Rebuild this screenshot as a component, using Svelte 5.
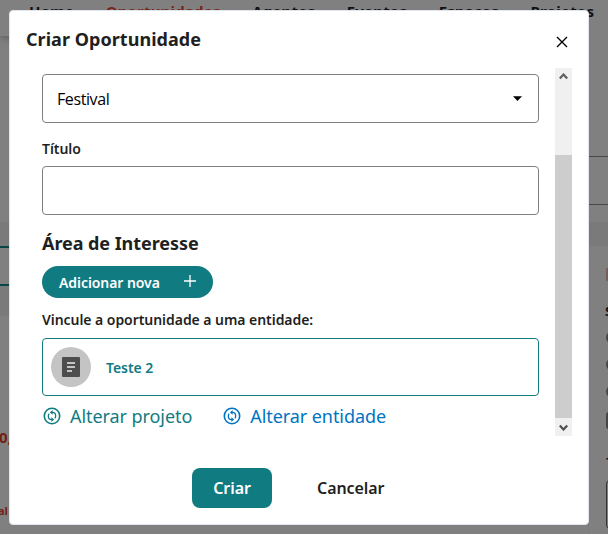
<script>
  const nav = ['Home', 'Oportunidades', 'Agentes', 'Eventos', 'Espaços', 'Projetos'];
  const links = [
    { label: 'Alterar projeto', tone: 'teal' },
    { label: 'Alterar entidade', tone: 'blue' }
  ];
</script>

<div class="screen">
  <div class="page">
    <header>
      {#each nav as item}
        <span class:active={item === 'Oportunidades'}>{item}</span>
      {/each}
    </header>
    <div class="columns">
      <div class="left">
        <div class="band"><div class="field"></div></div>
        <span class="count">0,</span>
        <span class="tag">al</span>
      </div>
      <div class="right">
        <div class="search"></div>
        <aside>
          <i class="bar"></i>
          <b>S</b>
          <i class="dot"></i><i class="dot"></i><i class="dot"></i><i class="box"></i>
          <b class="type">T</b>
          <i class="input"></i>
        </aside>
      </div>
    </div>
  </div>

  <div class="modal">
    <div class="head">
      <h1>Criar Oportunidade</h1>
      <svg class="close" width="12" height="12" viewBox="0 0 12 12"><path d="M1 1l10 10M11 1L1 11" stroke="#000" stroke-width="1.4" fill="none" /></svg>
    </div>

    <div class="body">
      <div class="form">
        <div class="input select">
          <span>Festival</span>
          <svg width="9" height="5" viewBox="0 0 9 5"><path d="M0 .3h9L4.5 5z" fill="#000" /></svg>
        </div>
        <div class="label title">Título</div>
        <div class="input"></div>
        <h2>Área de Interesse</h2>
        <div class="add">
          <span>Adicionar nova</span>
          <svg width="12" height="12" viewBox="0 0 12 12"><path d="M6 0v12M0 6h12" stroke="#fff" stroke-width="1.3" /></svg>
        </div>
        <div class="label link-label">Vincule a oportunidade a uma entidade:</div>
        <div class="entity">
          <div class="avatar">
            <svg width="18" height="20" viewBox="0 0 18 20"><rect width="18" height="20" rx="1" fill="#4d4d4d" /><path d="M5 6h8M5 10h8M5 14h5" stroke="#c4c4c4" stroke-width="2" /></svg>
          </div>
          <span>Teste 2</span>
        </div>
        <div class="links">
          {#each links as link}
            <div class="change {link.tone}">
              <svg width="18" height="18" viewBox="0 0 18 18" fill="none" stroke="currentColor">
                <circle cx="9" cy="9" r="7.7" stroke-width="1.6" />
                <path d="M8.8 5.4h.6c2 0 3.3 1.6 3.3 3.6 0 .9-.3 1.7-.9 2.3M9.2 12.6h-.6c-2 0-3.3-1.6-3.3-3.6 0-.9.3-1.7.9-2.3" stroke-width="1.3" />
                <path d="M9.6 3v4.8L6.9 5.4zM8.4 15v-4.8l2.7 2.4z" fill="currentColor" stroke="none" />
              </svg>
              <span>{link.label}</span>
            </div>
          {/each}
        </div>
      </div>
      <div class="scroll">
        <div class="arrow"><svg width="9" height="7" viewBox="0 0 9 7"><path d="M.8 5.5l3.7-4 3.7 4" fill="none" stroke="#606060" stroke-width="2.2" /></svg></div>
        <div class="track"></div>
        <div class="thumb"></div>
        <div class="arrow down"><svg width="9" height="7" viewBox="0 0 9 7"><path d="M.8 1.5l3.7 4 3.7-4" fill="none" stroke="#505050" stroke-width="2.2" /></svg></div>
      </div>
    </div>

    <div class="foot">
      <div class="create"><span>Criar</span></div>
      <span class="cancel">Cancelar</span>
    </div>
  </div>
</div>

<style>
  :global(body) { margin: 0; overflow: hidden; }
  .screen, .screen * { box-sizing: border-box; }
  .screen { position: relative; width: 608px; height: 534px; overflow: hidden; background: #808080; font-family: "Noto Sans", "Open Sans", sans-serif; white-space: nowrap; color: #1f1f1f; }
  .page { height: 534px; display: flex; flex-direction: column; }
  header { height: 36px; flex: none; display: flex; gap: 31.5px; padding-left: 29px; box-shadow: 0 1px 8px #555; font: 700 15px/22px "Noto Sans", sans-serif; letter-spacing: .2px; color: #111; }
  header .active { color: #7a2418; }
  .columns { flex: 1; display: flex; justify-content: space-between; }
  .left { width: 9px; padding-top: 186px; overflow: hidden; display: flex; flex-direction: column; color: #731f12; font-weight: 700; }
  .band { height: 94px; flex: none; padding-top: 24px; background: #7a7a7a; }
  .field { height: 40px; border: solid #084547; border-width: 2px 0; background: #808080; }
  .count { margin: 110px 0 0 -1px; font-size: 15px; line-height: 22px; }
  .tag { margin: 53px 0 0 -2px; font-size: 11px; line-height: 20px; }
  .right { width: 20px; display: flex; flex-direction: column; background: linear-gradient(#808080 186px, #7a7a7a 186px); }
  .search { height: 49px; margin-top: 120px; border: solid #494949; border-width: 1px 0; flex: none; }
  aside { margin: 41px 0 0 1px; flex: 1; overflow: hidden; background: #808080; border-radius: 4px 0 0; padding-left: 17px; display: flex; flex-direction: column; }
  aside b { font-size: 13px; line-height: 20px; margin: 20px 0 10px -1px; color: #111; flex: none; }
  aside .bar { height: 13px; width: 2px; margin: 22px 0 0; background: #755f58; flex: none; }
  aside .dot { width: 13px; height: 13px; margin-bottom: 14px; border: 2px solid #45454a; border-radius: 50%; flex: none; }
  aside .box { width: 17px; height: 17px; background: #45454a; border-radius: 3px; flex: none; }
  aside .type { margin: 23px 0 8px; }
  aside .input { width: 60px; height: 49px; border: 1px solid #333; border-radius: 4px; background: none; }

  .modal { position: absolute; left: 9px; top: 10px; width: 580px; height: 515px; padding: 0 16px; background: #fff; border: 1px solid #e0e5ef; border-radius: 4px; display: flex; flex-direction: column; }
  .head { height: 57px; display: flex; justify-content: space-between; padding-top: 14px; }
  h1, h2 { margin: 0; font-size: 18px; line-height: 28px; font-weight: 700; }
  h1 { letter-spacing: .04px; }
  .close { margin: 11px 4px 0 0; }
  .body { height: 368px; display: flex; justify-content: space-between; }
  .form { width: 497px; margin-left: 16px; padding-top: 6px; }
  .input { height: 49px; border: 1px solid #808080; border-radius: 4px; background: #fff; }
  .select { display: flex; align-items: center; justify-content: space-between; padding: 0 16px 0 14px; font: 16px/22px "Open Sans", sans-serif; letter-spacing: -.4px; color: #000; }
  .label { font-size: 14px; line-height: 20px; font-weight: 600; letter-spacing: -.05px; }
  .title { margin: 16px 0 7px; }
  h2 { margin-top: 14px; letter-spacing: -.06px; }
  .add { width: 171px; height: 32px; margin-top: 9px; padding: 0 17px; border-radius: 16px; background: #117b82; color: #fff; display: flex; align-items: center; justify-content: space-between; font-size: 14px; font-weight: 600; letter-spacing: -.07px; }
  .add svg { margin-top: -2px; }
  .link-label { margin: 12px 0 8px; }
  .entity { height: 58px; border: 1px solid #117b82; border-radius: 4px; display: flex; align-items: center; gap: 15px; padding-left: 8px; color: #117b82; font-size: 14px; font-weight: 600; letter-spacing: -.05px; }
  .entity span { padding-top: 1px; }
  .avatar { width: 40px; height: 40px; border-radius: 50%; background: #c4c4c4; display: flex; align-items: center; justify-content: center; }
  .links { display: flex; gap: 31px; padding: 7px 0 0 1px; }
  .change { display: flex; align-items: center; gap: 9px; font-size: 18px; line-height: 26px; letter-spacing: -.07px; }
  .teal { color: #117b82; }
  .blue { color: #0074c1; }
  .scroll { width: 17px; background: #f0f0f0; display: flex; flex-direction: column; }
  .arrow { height: 17px; display: flex; align-items: center; justify-content: center; }
  .track { height: 70px; }
  .thumb { flex: 1; background: #cdcdcd; }
  .down { height: 18px; }
  .foot { display: flex; align-items: center; height: 40px; margin: 32px 0 0 166px; gap: 45px; font-size: 16px; font-weight: 600; letter-spacing: -.07px; }
  .create { width: 80px; height: 40px; border-radius: 8px; background: #117b82; color: #fff; display: flex; align-items: center; justify-content: center; }
</style>
